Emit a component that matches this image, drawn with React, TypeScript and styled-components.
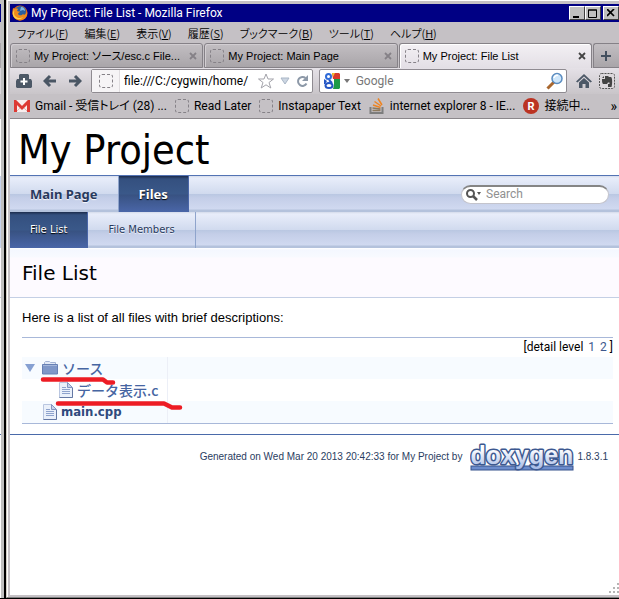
import React from "react";
import styled, { createGlobalStyle, css } from "styled-components";

const UI = `Roboto, "Noto Sans CJK JP", sans-serif`;

const GlobalStyle = createGlobalStyle`
  * { box-sizing: border-box; }
  html, body { margin: 0; padding: 0; height: 100%; background: #fff; }
  body { font-family: ${UI}; font-size: 12px; color: #000; overflow: hidden; }
  #root { height: 100%; }
  button, input { font: inherit; color: inherit; margin: 0; padding: 0; border: 0; background: none; }
  a { text-decoration: none; color: inherit; }
  svg { display: block; flex: none; }
`;

const Desktop = styled.div`
  display: flex;
  height: 100vh;
  background: #000;
`;

const Neighbour = styled.div`
  display: flex;
  flex-direction: column;
  flex: none;
  width: 4px;
  margin-right: 2px;
  margin-bottom: 1px;
  border-right: 3px solid #c0c0c0;
  background: #fff;
`;

const Slice = styled.div<{ $h: number; $c: string }>`
  flex: none;
  height: ${(p) => p.$h}px;
  background: ${(p) => p.$c};
`;

const Window = styled.div`
  display: flex;
  flex-direction: column;
  flex: 1;
  min-width: 0;
  margin-bottom: 1px;
  border-left: 1px solid #d4d0c8;
  border-bottom: 1px solid #808080;
  background: #c5c1c5;
  padding: 1px 0 2px 3px;
  box-shadow: inset 1px 1px 0 #fff;
`;

const TitleBar = styled.header`
  display: flex;
  align-items: center;
  flex: none;
  height: 18px;
  margin-top: 3px;
  padding: 0 0 0 2px;
  background: #000084;
  color: #fff;
  gap: 3px;
`;

const TitleText = styled.div`
  flex: 1;
  line-height: 18px;
  white-space: nowrap;
`;

const Captions = styled.div`
  display: flex;
`;

const CaptionButton = styled.button<{ $gap?: boolean }>`
  display: grid;
  place-items: center;
  width: 16px;
  height: 14px;
  margin-left: ${(p) => (p.$gap ? 2 : 0)}px;
  background: #c0c0c0;
  border: 1px solid;
  border-color: #fff #404040 #404040 #fff;
`;

const MenuBar = styled.nav`
  display: flex;
  align-items: center;
  flex: none;
  height: 21px;
  padding-left: 7px;
  gap: 16px;
  font-size: 11px;
  font-feature-settings: "palt";
`;

const MenuItem = styled.button`
  white-space: nowrap;
  line-height: 18px;
  font-family: "Noto Sans CJK JP", sans-serif;
  font-weight: 350;
`;

const TabStrip = styled.div`
  display: flex;
  flex: none;
  height: 25px;
  gap: 1px;
`;

const Tab = styled.div<{ $active?: boolean }>`
  display: flex;
  align-items: center;
  flex: 1;
  min-width: 0;
  padding: 0 5px;
  gap: 4px;
  border: 1px solid #858187;
  border-bottom: ${(p) => (p.$active ? "0" : "1px solid #858187")};
  border-radius: 3px 3px 0 0;
  background: ${(p) =>
    p.$active ? "linear-gradient(#f3f0f4, #e3dfe5)" : "linear-gradient(#c2bec2, #a9a5a9)"};
  box-shadow: inset 1px 1px 0 ${(p) => (p.$active ? "#fff" : "#d2ced2")};
`;

const TabLabel = styled.button`
  flex: 1;
  min-width: 0;
  text-align: left;
  white-space: nowrap;
  font: 11px/20px "Liberation Sans", "Noto Sans CJK JP", sans-serif;
  font-feature-settings: "palt";
`;

const CloseButton = styled.button<{ $dim?: boolean }>`
  display: grid;
  place-items: center;
  width: 8px;
  height: 16px;
  color: ${(p) => (p.$dim ? "#858187" : "#444")};
`;

const NewTab = styled.button`
  display: grid;
  place-items: center;
  flex: none;
  width: 26px;
  border: 1px solid #858187;
  border-right: 0;
  border-radius: 3px 0 0 0;
  background: linear-gradient(#c2bec2, #a9a5a9);
  color: #44505f;
`;

const Favicon = styled.span`
  flex: none;
  width: 14px;
  height: 14px;
  border: 1px dashed #858187;
  border-radius: 3px;
`;

const NavBar = styled.div`
  display: flex;
  align-items: center;
  flex: none;
  height: 26px;
  padding-left: 5px;
  background: linear-gradient(#e5e1e7, #c9c5c9);
`;

const IconButton = styled.button<{ $w?: number }>`
  display: grid;
  place-items: center;
  flex: none;
  width: ${(p) => p.$w ?? 26}px;
  height: 24px;
`;

const Field = styled.div<{ $grow: number }>`
  display: flex;
  align-items: center;
  flex: ${(p) => p.$grow} 1 0;
  min-width: 0;
  height: 24px;
  margin-right: 6px;
  border: 1px solid #8f8b91;
  border-radius: 2px;
  background: #fff;
`;

const LocationField = styled(Field)`
  margin-left: 7px;
`;

const Identity = styled.div`
  display: grid;
  place-items: center;
  flex: none;
  width: 28px;
  height: 100%;
  border-right: 1px solid #e0dde0;
  background: #f6f4f6;
`;

const FieldInput = styled.input<{ $indent: number }>`
  flex: 1;
  min-width: 0;
  height: 20px;
  padding-left: ${(p) => p.$indent}px;
  outline: 0;
  &::placeholder { color: #777; opacity: 1; }
`;

const Bookmarks = styled.nav`
  display: flex;
  align-items: center;
  flex: none;
  height: 25px;
  padding: 0 2px 0 4px;
  gap: 8px;
  border-bottom: 1px solid #8c888c;
`;

const Bookmark = styled.a`
  display: flex;
  align-items: center;
  gap: 5px;
  white-space: nowrap;
  line-height: 20px;
  font-feature-settings: "palt";
`;

const More = styled.button`
  margin-left: auto;
  font-size: 14px;
  line-height: 18px;
`;

const Page = styled.main`
  position: relative;
  flex: 1;
  min-height: 0;
  overflow: hidden;
  background: #fff;
`;

const ProjectName = styled.div`
  padding: 6px 0 0 8px;
  border-bottom: 1px solid #5373b4;
  font: 41px/50px "DejaVu Sans Condensed", "DejaVu Sans", sans-serif;
  white-space: nowrap;
`;

const band = css`
  background: linear-gradient(#d5dbea 0, #e8edfa 2px, #d0daee 18px, #b9c7e2 18px, #c4cee8 22px, #d0d9f0 33px, #b4c2dc 34px, #b4c2dc 36px);
`;

const NavRow = styled.nav<{ $main?: boolean }>`
  display: flex;
  align-items: center;
  height: 36px;
  ${band}
  font: ${(p) =>
    p.$main ? `bold 13px/36px "Noto Sans", sans-serif` : `10px/36px "DejaVu Sans", sans-serif`};
`;

const NavLink = styled.a<{ $on?: boolean }>`
  height: 36px;
  padding: 0 20px;
  white-space: nowrap;
  color: #283a5d;
  border-right: 1px solid #8fa4cc;
  text-shadow: 0 1px 1px rgba(255, 255, 255, 0.9);
  ${(p) =>
    p.$on &&
    css`
      color: #fff;
      text-shadow: 0 1px 1px #000;
      border-color: #4a66a8;
      background: linear-gradient(#1c2c4c 0, #34507f 3px, #3a5889 18px, #385282 19px, #4a66a8 36px);
    `}
`;

const SearchBox = styled.label`
  display: flex;
  align-items: center;
  width: 148px;
  height: 19px;
  margin: 0 10px 0 auto;
  padding-left: 4px;
  gap: 5px;
  border: 1px solid #c4c4cc;
  border-top: 2px solid #858585;
  border-radius: 10px;
  background: #fff;
`;

const SearchInput = styled.input`
  width: 100px;
  height: 15px;
  font: 12px/15px Roboto, sans-serif;
  outline: 0;
  &::placeholder { color: #909090; opacity: 1; }
`;

const Header = styled.div`
  height: 50px;
  padding-left: 12px;
  border-bottom: 1px solid #c4cfe5;
  background: linear-gradient(#fff 0, #f4f7ff 2px, #f8faff 9px, #fdfaff 10px, #fdfaff 100%);
`;

const Title = styled.h1`
  margin: 0;
  font: 20px/50px "DejaVu Sans", sans-serif;
`;

const Contents = styled.div`
  padding: 0 6px 10px 12px;
`;

const Intro = styled.p`
  margin: 0;
  padding: 10px 0 9px;
  font: 13px/20px "Liberation Sans", sans-serif;
`;

const Directory = styled.div`
  position: relative;
  border-top: 1px solid #a8b8d9;
  border-bottom: 1px solid #a8b8d9;
`;

const Levels = styled.div`
  height: 19px;
  font: 12px/19px Roboto, sans-serif;
  text-align: right;
`;

const Level = styled.button`
  margin-left: 5px;
  color: #3d578c;
`;

const Files = styled.table`
  width: 100%;
  border-collapse: collapse;
  tr { height: 22px; }
  tr:nth-child(odd) { background: #f7fbff; }
  td { padding: 0; }
`;

const EntryCell = styled.td`
  width: 145px;
  border-right: 1px solid #eceff7;
`;

const Entry = styled.div<{ $indent: number }>`
  display: flex;
  align-items: center;
  height: 22px;
  padding-left: ${(p) => p.$indent}px;
  gap: 4px;
  white-space: nowrap;
`;

const FileLink = styled.a<{ $dark?: boolean }>`
  color: ${(p) => (p.$dark ? "#2f4a7d" : "#4665a2")};
  font: bold 13px/20px "DejaVu Sans Condensed", "DejaVu Sans", "Noto Sans CJK JP", sans-serif;
`;

const JpLink = styled(FileLink)`
  font: 500 14px/20px "Noto Sans CJK JP", sans-serif;
`;

const Toggle = styled.button`
  display: grid;
  place-items: center;
  width: 16px;
  height: 16px;
`;

const Marks = styled.svg`
  position: absolute;
  left: 0;
  top: 0;
  pointer-events: none;
`;

const Footer = styled.footer`
  display: flex;
  align-items: center;
  justify-content: flex-end;
  height: 45px;
  padding-right: 11px;
  gap: 3px;
  border-top: 1px solid #4a6aaa;
  color: #2a3d61;
  font: 10px/14px "Liberation Sans", sans-serif;
  white-space: nowrap;
`;

const LogoLink = styled.a`
  margin-left: 5px;
`;

const Grip = styled.svg`
  position: absolute;
  right: 0;
  bottom: 2px;
`;

const Firefox = () => (
  <svg width="16" height="16" viewBox="0 0 16 16">
    <circle cx="8" cy="8" r="7.5" fill="#e2670c" />
    <circle cx="8.5" cy="6.5" r="5.5" fill="#2c5f9e" />
    <path d="M9 2c3 0 4 2 4 4l-2-1-3 1z" fill="#7fb8e6" />
    <path d="M1 3l2 1c1-.6 2-.5 3 0l-1 2c1 .5 2 .4 3 .6-.4 1.4-2 1.4-2 2.3 1 2 4 1.600 5 0 1 2 4-.5 4-3 1 4-1 9-7 9.500C2 15 0 10 .5 6z" fill="#f08a1c" />
    <path d="M2 5c1 1-1 3 1 6 2 2 5 3 8 1-2 3-7 3-9 0S1 7 2 5z" fill="#fbd04a" />
  </svg>
);

const Cross = () => (
  <svg width="8" height="8" viewBox="0 0 8 8">
    <path d="M1 1l6 6M7 1L1 7" stroke="currentColor" strokeWidth="1.8" />
  </svg>
);

const Arrow = ({ flip }: { flip?: boolean }) => (
  <svg width="14" height="14" viewBox="0 0 14 14">
    <path
      d={flip ? "M1 7h11M7 2l5 5-5 5" : "M13 7H2M7 2L2 7l5 5"}
      fill="none"
      stroke="#4a5664"
      strokeWidth="3"
    />
  </svg>
);

const Doc = () => (
  <svg width="14" height="16" viewBox="0 0 14 16">
    <path d="M.5.5h8l5 5v10H.5z" fill="#eaf0fa" stroke="#b9c6e0" />
    <path d="M8.500.5v5h5z" fill="#c5d2ea" stroke="#8296c0" />
    <path d="M3 5.500h4M3 7.500h8M3 9.500h8M3 11.500h8" stroke="#8ea3cd" />
    <path d="M.5 15.500h13V6" fill="none" stroke="#6478a4" />
  </svg>
);

const Folder = () => (
  <svg width="16" height="14" viewBox="0 0 16 14">
    <path d="M2.500 3V1.500L3.500.5h4l1 1h5V4" fill="#e2e9f6" stroke="#a3b3d4" />
    <path d="M.5 3.500h15v9.500H.5z" fill="#7f97c8" stroke="#6780b4" />
    <path d="M1 4.500h14" stroke="#a4b6da" />
  </svg>
);

const Logo = () => (
  <svg width="104" height="32" viewBox="0 0 104 32" role="img" aria-label="doxygen">
    <defs>
      <linearGradient id="ink" x1="0" y1="0" x2="0" y2="1">
        <stop offset="0.3" stopColor="#fff" />
        <stop offset="1" stopColor="#a4b9e6" />
      </linearGradient>
    </defs>
    <rect x="1" y="25" width="102" height="4" fill="#6c8ccc" stroke="#36528c" />
    <text
      x="52"
      y="23"
      textAnchor="middle"
      fontFamily="Liberation Sans, sans-serif"
      fontWeight="700"
      fontSize="25"
      fill="url(#ink)"
      stroke="#3c5890"
      strokeWidth="3"
      strokeLinejoin="round"
      paintOrder="stroke"
    >
      doxygen
    </text>
  </svg>
);

const menus: [string, string][] = [
  ["ファイル", "F"],
  ["編集", "E"],
  ["表示", "V"],
  ["履歴", "S"],
  ["ブックマーク", "B"],
  ["ツール", "T"],
  ["ヘルプ", "H"],
];

const tabs = [
  { label: "My Project: ソース/esc.c File...", active: false },
  { label: "My Project: Main Page", active: false },
  { label: "My Project: File List", active: true },
];

export default function App() {
  return (
    <Desktop>
      <GlobalStyle />
      <Neighbour>
        <Slice $h={4} $c="#c0c0c0" />
        <Slice $h={18} $c="#000084" />
        <Slice $h={21} $c="#c5c1c5" />
        <Slice $h={25} $c="#aaa6aa" />
        <Slice $h={26} $c="#dcd8dc" />
        <Slice $h={25} $c="#c5c1c5" />
        <Slice $h={57} $c="#fff" />
        <Slice $h={72} $c="#c8d3ec" />
        <Slice $h={49} $c="#fdfaff" />
        <Slice $h={1} $c="#c4cfe5" />
        <Slice $h={136} $c="#fff" />
        <Slice $h={1} $c="#4a6aaa" />
      </Neighbour>
      <Window>
        <TitleBar>
          <Firefox />
          <TitleText>My Project: File List - Mozilla Firefox</TitleText>
          <Captions>
            <CaptionButton aria-label="Minimize">
              <svg width="10" height="9" viewBox="0 0 10 9"><path d="M1 7h6v2H1z" /></svg>
            </CaptionButton>
            <CaptionButton aria-label="Maximize">
              <svg width="10" height="9" viewBox="0 0 10 9"><path d="M.5 1h8v7.500h-8zM0 1h9" fill="none" stroke="#000" /></svg>
            </CaptionButton>
            <CaptionButton $gap aria-label="Close">
              <svg width="8" height="8" viewBox="0 0 8 8"><path d="M0 0l7 7M7 0L0 7" stroke="#000" strokeWidth="1.7" /></svg>
            </CaptionButton>
          </Captions>
        </TitleBar>
        <MenuBar>
          {menus.map(([name, key]) => (
            <MenuItem key={key}>{name}(<u>{key}</u>)</MenuItem>
          ))}
        </MenuBar>
        <TabStrip>
          {tabs.map((t) => (
            <Tab key={t.label} $active={t.active}>
              <Favicon />
              <TabLabel>{t.label}</TabLabel>
              <CloseButton $dim={!t.active} aria-label="Close tab"><Cross /></CloseButton>
            </Tab>
          ))}
          <NewTab aria-label="New tab">
            <svg width="12" height="12" viewBox="0 0 12 12"><path d="M6 1v10M1 6h10" stroke="currentColor" strokeWidth="2" /></svg>
          </NewTab>
        </TabStrip>
        <NavBar>
          <IconButton $w={18} aria-label="Add">
            <svg width="16" height="14" viewBox="0 0 16 14">
              <path d="M4 0h8l1 1v4h2l1 2v6l-1 1H1l-1-1V7l1-2h2V1z" fill="#4c5866" />
              <path d="M8 4v7M4.500 7.500h7" stroke="#fff" strokeWidth="2" />
            </svg>
          </IconButton>
          <IconButton $w={33} aria-label="Back"><Arrow /></IconButton>
          <IconButton $w={18} aria-label="Forward"><Arrow flip /></IconButton>
          <LocationField $grow={222}>
            <Identity><Favicon /></Identity>
            <FieldInput $indent={4} aria-label="Location" defaultValue="file:///C:/cygwin/home/" />
            <IconButton $w={20} aria-label="Bookmark this page">
              <svg width="16" height="16" viewBox="0 0 16 16">
                <path d="M8 1l2 5h5.500l-4.500 3.500 1.800 5.500L8 11.800 3.200 15 5 9.500.5 6H6z" fill="#fff" stroke="#a3a3aa" />
              </svg>
            </IconButton>
            <IconButton $w={18} aria-label="History">
              <svg width="10" height="8" viewBox="0 0 10 8"><path d="M1 1h8L5 7z" fill="#ccd6e2" stroke="#a9b6c6" /></svg>
            </IconButton>
            <IconButton $w={18} aria-label="Reload">
              <svg width="13" height="13" viewBox="0 0 13 13">
                <path d="M10.500 8.500A4.500 4.500 0 1 1 9.500 3" fill="none" stroke="#8d99a8" strokeWidth="2" />
                <path d="M12 0v6H6z" fill="#8d99a8" />
              </svg>
            </IconButton>
          </LocationField>
          <Field $grow={249}>
            <IconButton $w={24} aria-label="Search engine">
              <svg width="16" height="16" viewBox="0 0 16 16">
                <rect width="16" height="16" rx="1" fill="#fff" />
                <path d="M8 0h7l1 1v5H9z" fill="#d83a2c" />
                <path d="M10 6h6v9l-1 1h-6l1-4z" fill="#1d9a48" />
                <path d="M0 6l3 2-2 3H0z" fill="#2456c4" />
                <circle cx="4.500" cy="3.500" r="2.500" fill="#fff" stroke="#2f6bd8" strokeWidth="2" />
                <path d="M5 7l3 3" stroke="#2456c4" strokeWidth="2" />
                <ellipse cx="5" cy="12.500" rx="3.500" ry="2.500" fill="#fff" stroke="#2456c4" strokeWidth="2" />
                <path d="M8 0h3L9 4z" fill="#f2c230" />
              </svg>
            </IconButton>
            <svg width="6" height="4" viewBox="0 0 6 4"><path d="M0 0h6L3 4z" fill="#777" /></svg>
            <FieldInput $indent={6} aria-label="Search Google" placeholder="Google" />
            <IconButton $w={22} aria-label="Search">
              <svg width="18" height="18" viewBox="0 0 18 18">
                <path d="M8 10l-6.500 6.500" stroke="#a9672e" strokeWidth="3" />
                <circle cx="11" cy="6.500" r="5" fill="#cfe7fb" stroke="#5b8cc0" strokeWidth="1.500" />
                <path d="M8 6a3 3 0 0 1 4-2.500" fill="none" stroke="#fff" strokeWidth="1.500" />
              </svg>
            </IconButton>
          </Field>
          <IconButton $w={22} aria-label="Home">
            <svg width="16" height="14" viewBox="0 0 16 14">
              <path d="M0 7.500L8 0l8 7.500-1.500 1L8 2.500 1.500 8.500z" fill="#4c5866" />
              <path d="M3 8.500L8 4l5 4.500V14H9.500v-4h-3v4H3z" fill="#4c5866" />
            </svg>
          </IconButton>
          <IconButton $w={24} aria-label="Clip page">
            <svg width="16" height="16" viewBox="0 0 16 16">
              <rect x=".5" y=".5" width="15" height="15" rx="2" fill="#dcd8dc" stroke="#555" strokeDasharray="2 1" />
              <path d="M3 6h3V3h3l1 1h2c1.500 1 1.500 7 .5 10H9v-3h1.500v-1.500H9L8 11H4C3 10 3 8 3 6z" fill="#444" />
              <path d="M3 5h2V3z" fill="#444" />
            </svg>
          </IconButton>
        </NavBar>
        <Bookmarks>
          <Bookmark href="#gmail">
            <svg width="16" height="12" viewBox="0 0 16 12">
              <rect width="16" height="12" fill="#f8eeee" />
              <path d="M1.500 12V1.500L8 8l6.500-6.500V12" fill="none" stroke="#dd3a34" strokeWidth="3" />
              <path d="M3 11l3-3M13 11l-3-3" stroke="#e5b8b8" />
            </svg>
            Gmail - 受信トレイ (28) ...
          </Bookmark>
          <Bookmark href="#later"><Favicon />Read Later</Bookmark>
          <Bookmark href="#text"><Favicon />Instapaper Text</Bookmark>
          <Bookmark href="#ie">
            <svg width="16" height="16" viewBox="0 0 16 16">
              <path d="M1.500 9v6h12V9" fill="none" stroke="#7d7d7d" strokeWidth="2" />
              <path d="M3.500 12.500h8M3.500 10l8 1" stroke="#8e7a5e" strokeWidth="1.500" />
              <path d="M4 7l7.500 2.500M5.500 3.500l6.500 4.500M9 .5l4 6.500" stroke="#ee8422" strokeWidth="1.500" />
            </svg>
            internet explorer 8 - IE...
          </Bookmark>
          <Bookmark href="#connecting">
            <svg width="16" height="16" viewBox="0 0 16 16">
              <circle cx="8" cy="8" r="8" fill="#bb3322" />
              <text x="8" y="12" textAnchor="middle" fontFamily="Roboto, sans-serif" fontWeight="700" fontSize="11" fill="#fff">R</text>
            </svg>
            接続中...
          </Bookmark>
          <More aria-label="More bookmarks">»</More>
        </Bookmarks>
        <Page>
          <ProjectName>My Project</ProjectName>
          <NavRow $main>
            <NavLink href="#main">Main Page</NavLink>
            <NavLink href="#files" $on>Files</NavLink>
            <SearchBox>
              <svg width="15" height="12" viewBox="0 0 15 12">
                <circle cx="4.500" cy="4.500" r="3.500" fill="none" stroke="#555" strokeWidth="2" />
                <path d="M7 7l4 4" stroke="#555" strokeWidth="2.500" />
                <path d="M11 3h4l-2 3z" fill="#555" />
              </svg>
              <SearchInput aria-label="Search" placeholder="Search" />
            </SearchBox>
          </NavRow>
          <NavRow>
            <NavLink href="#list" $on>File List</NavLink>
            <NavLink href="#members">File Members</NavLink>
          </NavRow>
          <Header><Title>File List</Title></Header>
          <Contents>
            <Intro>Here is a list of all files with brief descriptions:</Intro>
            <Directory>
              <Levels>[detail level<Level>1</Level><Level>2</Level> ]</Levels>
              <Files>
                <tbody>
                  <tr>
                    <EntryCell>
                      <Entry $indent={0}>
                        <Toggle aria-label="Collapse">
                          <svg width="10" height="8" viewBox="0 0 10 8"><path d="M0 0h10L5 8z" fill="#86a0d2" /></svg>
                        </Toggle>
                        <Folder />
                        <JpLink href="#src">ソース</JpLink>
                      </Entry>
                    </EntryCell>
                    <td />
                  </tr>
                  <tr>
                    <EntryCell>
                      <Entry $indent={37}><Doc /><JpLink href="#data">データ表示.c</JpLink></Entry>
                    </EntryCell>
                    <td />
                  </tr>
                  <tr>
                    <EntryCell>
                      <Entry $indent={21}><Doc /><FileLink $dark href="#cpp">main.cpp</FileLink></Entry>
                    </EntryCell>
                    <td />
                  </tr>
                </tbody>
              </Files>
              <Marks width="170" height="80" viewBox="0 0 170 80" aria-hidden="true">
                <path d="M21 41.500h60l4 3h6M36 65.500h106l8 4h8" fill="none" stroke="#ed1c24" strokeWidth="4.500" strokeLinecap="round" strokeLinejoin="round" />
              </Marks>
            </Directory>
          </Contents>
          <Footer>
            <span>Generated on Wed Mar 20 2013 20:42:33 for My Project by</span>
            <LogoLink href="#doxygen"><Logo /></LogoLink>
            <span>1.8.3.1</span>
          </Footer>
          <Grip width="10" height="10" viewBox="0 0 10 10" fill="#b5b5b5">
            <path d="M8 0h2v2H8zM4 4h2v2H4zM8 4h2v2H8zM0 8h2v2H0zM4 8h2v2H4zM8 8h2v2H8z" />
          </Grip>
        </Page>
      </Window>
    </Desktop>
  );
}
